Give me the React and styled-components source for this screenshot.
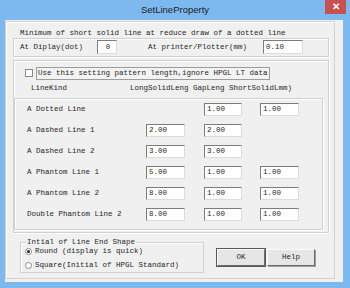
import React from 'react';
import styled, { createGlobalStyle } from 'styled-components';

const GlobalStyle = createGlobalStyle`
  html, body {
    margin: 0;
    padding: 0;
    background: #7db8ef;
  }
  * {
    box-sizing: border-box;
  }
`;

const Window = styled.div`
  width: 350px;
  height: 288px;
  background: #7db8ef;
  display: flex;
  flex-direction: column;
  font-family: "Liberation Mono", "DejaVu Sans Mono", monospace;
  font-size: 7.5px;
  color: #262626;
`;

const TitleBar = styled.div`
  height: 20px;
  display: grid;
  grid-template-columns: 1fr auto 1fr;
  align-items: start;
`;

const Title = styled.div`
  grid-column: 2;
  font-family: "Liberation Sans", Arial, sans-serif;
  font-size: 9.5px;
  line-height: 20px;
  color: #1e1e1e;
`;

const CloseButton = styled.div`
  grid-column: 3;
  justify-self: end;
  width: 21px;
  height: 14px;
  margin-right: 4px;
  background: #c75050;
  color: #fff;
  font-family: "Liberation Sans", Arial, sans-serif;
  font-weight: bold;
  font-size: 10px;
  line-height: 13px;
  text-align: center;
`;

const Client = styled.div`
  flex: 1;
  margin: 0 7px 6px 5px;
  background: #f0f0f0;
  display: flex;
  flex-direction: column;
`;

const Panel = styled.div`
  margin-top: 1px;
  width: 330px;
  height: 258px;
  border: 1px solid #d2d2d2;
  box-shadow: inset 1px 1px 0 #fff;
  padding: 6px 5px 0 7px;
  display: flex;
  flex-direction: column;
`;

const Caption = styled.div`
  height: 10px;
  line-height: 10px;
  padding-left: 7px;
  white-space: pre;
`;

const Etched = styled.div`
  border: 1px solid #d0d0d0;
  box-shadow: inset 1px 1px 0 #fff, 1px 1px 0 #fff;
`;

const SettingRow = styled(Etched)`
  width: 316px;
  height: 19px;
  display: flex;
  align-items: center;
  padding-left: 6px;
`;

const Text = styled.span`
  display: inline-block;
  width: ${(p) => p.$w || 'auto'};
  white-space: pre;
  line-height: 10px;
`;

const Field = styled.input`
  width: ${(p) => p.$w || '39px'};
  height: ${(p) => p.$h || '13px'};
  margin: 0;
  padding: 0 0 0 2px;
  background: #fff;
  border: 1px solid;
  border-color: #7c7c7c #dcdcdc #dcdcdc #7c7c7c;
  font-family: "Liberation Mono", "DejaVu Sans Mono", monospace;
  font-size: 7.5px;
  color: #262626;
  text-align: ${(p) => (p.$center ? 'center' : 'left')};
  outline: none;
`;

const Group = styled(Etched)`
  margin-top: 3px;
  width: 316px;
  height: 174px;
  padding-top: 6px;
  display: flex;
  flex-direction: column;
`;

const CheckRow = styled.div`
  height: 13px;
  display: flex;
  align-items: center;
  padding-left: 11px;
  gap: 3px;
`;

const CheckBox = styled.span`
  width: 8px;
  height: 8px;
  background: #fff;
  border: 1px solid #8a8a8a;
`;

const CheckLabel = styled.span`
  height: 13px;
  line-height: 11px;
  padding: 0 1px;
  border: 1px solid #9c9c9c;
  background: #f3f3f3;
  white-space: pre;
`;

const HeaderRow = styled.div`
  margin: 3px 0 5px;
  height: 10px;
  line-height: 10px;
  display: grid;
  grid-template-columns: 99px auto;
  padding-left: 17px;
  white-space: pre;
`;

const LineTable = styled(Etched)`
  width: 309px;
  height: 132px;
  display: grid;
  grid-template-columns: 119px 58px 56px 39px;
  grid-auto-rows: 21px;
  align-items: center;
  padding: 0 0 4px 12px;
`;

const Bottom = styled.div`
  height: 45px;
  display: flex;
  align-items: flex-start;
  padding: 4px 0 0 7px;
`;

const ShapeSet = styled.fieldset`
  margin: 0;
  width: 184px;
  height: 36px;
  padding: 0 0 0 4px;
  border: 1px solid #d0d0d0;
  box-shadow: inset 1px 1px 0 #fff;
  min-width: 0;
`;

const Legend = styled.legend`
  padding: 0 1px;
  margin-left: 1px;
  line-height: 10px;
  height: 10px;
  white-space: pre;
`;

const RadioList = styled.div`
  margin-top: -3px;
  display: flex;
  flex-direction: column;
`;

const RadioRow = styled.div`
  height: 14px;
  display: flex;
  align-items: center;
  gap: 3px;
  white-space: pre;
`;

const Radio = styled.span`
  width: 7px;
  height: 7px;
  border-radius: 50%;
  border: 1px solid #8a8a8a;
  background: #fff;
  display: flex;
  align-items: center;
  justify-content: center;
  &::after {
    content: '';
    width: 3px;
    height: 3px;
    border-radius: 50%;
    background: ${(p) => (p.$on ? '#222' : 'transparent')};
  }
`;

const Buttons = styled.div`
  margin: 12px 0 0 13px;
  display: flex;
  gap: 2px;
`;

const Button = styled.div`
  width: 48px;
  height: 17px;
  line-height: 15px;
  text-align: center;
  background: #e6e6e6;
  border: 1px solid;
  border-color: #fafafa #6a6a6a #6a6a6a #fafafa;
  box-shadow: ${(p) => (p.$default ? '0 0 0 1px #5a5a5a' : '1px 1px 0 #a0a0a0')};
`;

const lines = [
  { name: 'A Dotted Line', long: null, gap: '1.00', short: '1.00' },
  { name: 'A Dashed Line 1', long: '2.00', gap: '2.00', short: null },
  { name: 'A Dashed Line 2', long: '3.00', gap: '3.00', short: null },
  { name: 'A Phantom Line 1', long: '5.00', gap: '1.00', short: '1.00' },
  { name: 'A Phantom Line 2', long: '8.00', gap: '1.00', short: '1.00' },
  { name: 'Double Phantom Line 2', long: '8.00', gap: '1.00', short: '1.00' },
];

const Cell = ({ value, w }) =>
  value ? <Field readOnly value={value} $w={w} /> : <span />;

export default function App() {
  return (
    <>
      <GlobalStyle />
      <Window>
        <TitleBar>
          <Title>SetLineProperty</Title>
          <CloseButton>✕</CloseButton>
        </TitleBar>
        <Client>
          <Panel>
            <Caption>Minimum of short solid line at reduce draw of a dotted line</Caption>
            <SettingRow>
              <Text $w="77px">At Diplay(dot)</Text>
              <Field readOnly value="0" $w="20px" $h="14px" $center />
              <Text $w="31px" />
              <Text $w="115px">At printer/Plotter(mm)</Text>
              <Field readOnly value="0.10" $w="40px" $h="14px" />
            </SettingRow>
            <Group>
              <CheckRow>
                <CheckBox />
                <CheckLabel>Use this setting pattern length,ignore HPGL LT data</CheckLabel>
              </CheckRow>
              <HeaderRow>
                <span>LineKind</span>
                <span>LongSolidLeng GapLeng ShortSolidLmm)</span>
              </HeaderRow>
              <LineTable>
                {lines.map((l) => (
                  <React.Fragment key={l.name}>
                    <Text>{l.name}</Text>
                    <Cell value={l.long} w="39px" />
                    <Cell value={l.gap} w="38px" />
                    <Cell value={l.short} w="39px" />
                  </React.Fragment>
                ))}
              </LineTable>
            </Group>
            <Bottom>
              <ShapeSet>
                <Legend>Intial of Line End Shape</Legend>
                <RadioList>
                  <RadioRow>
                    <Radio $on />
                    Round (display is quick)
                  </RadioRow>
                  <RadioRow>
                    <Radio />
                    Square(Initial of HPGL Standard)
                  </RadioRow>
                </RadioList>
              </ShapeSet>
              <Buttons>
                <Button $default>OK</Button>
                <Button>Help</Button>
              </Buttons>
            </Bottom>
          </Panel>
        </Client>
      </Window>
    </>
  );
}
